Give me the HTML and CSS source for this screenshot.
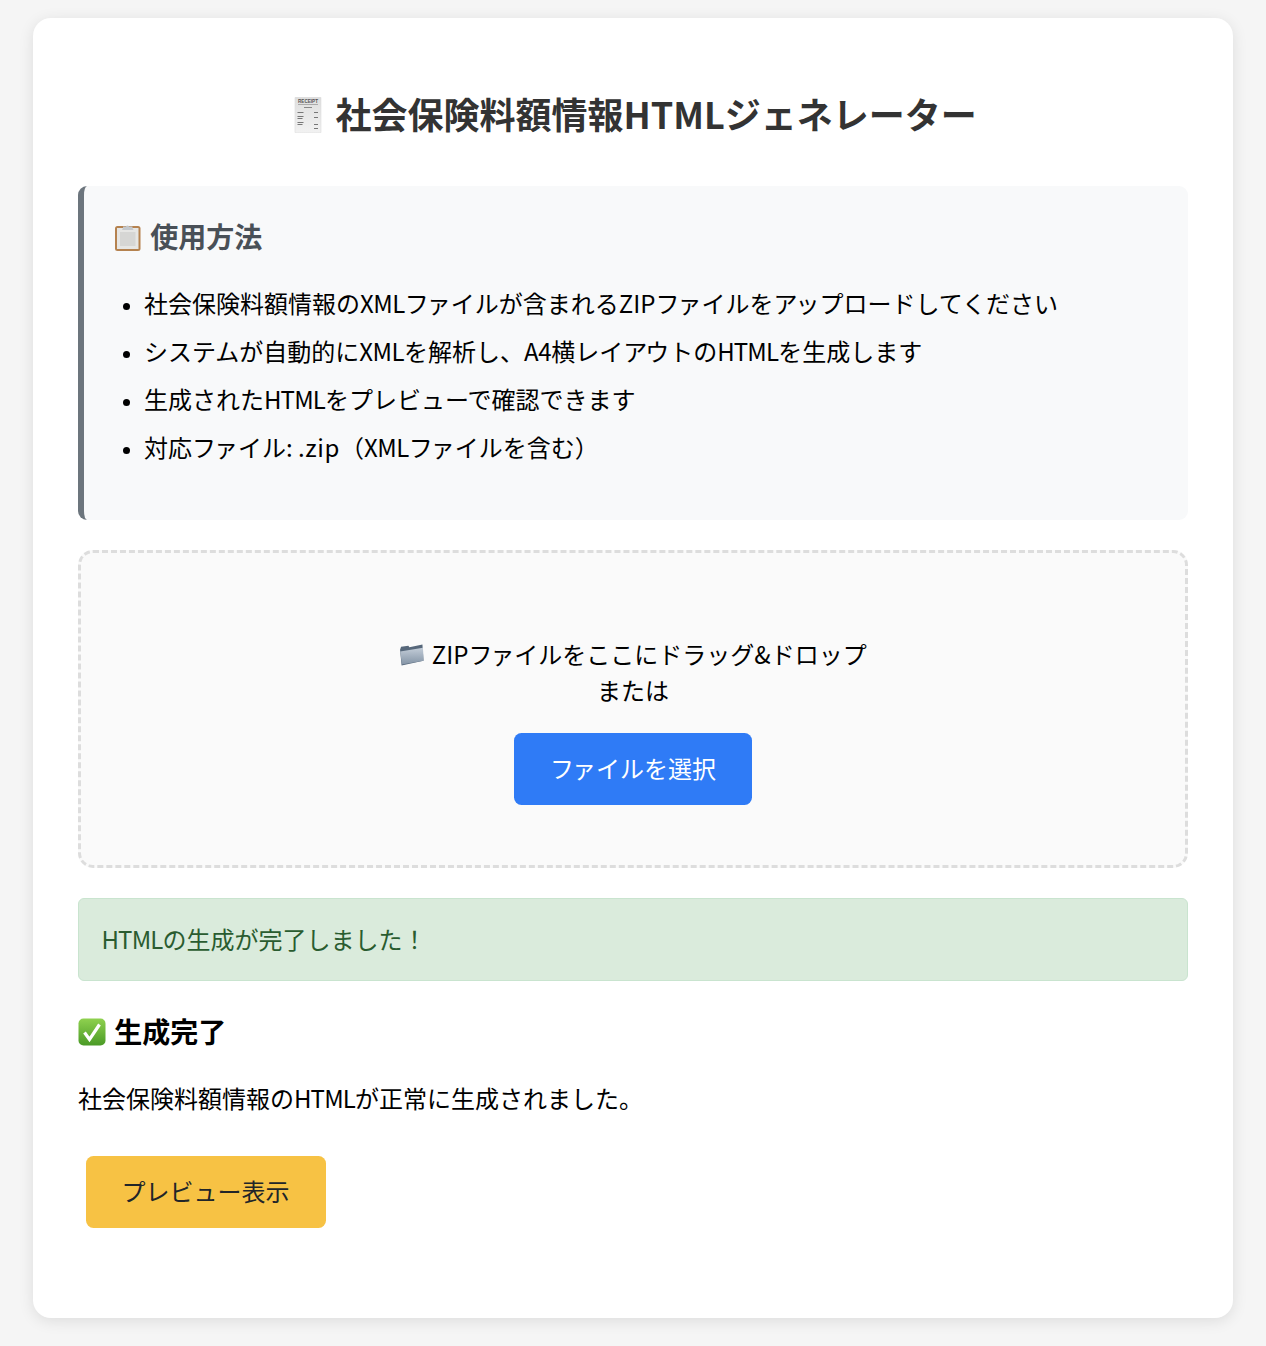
FILE: index.html
```html
<!DOCTYPE html>
<html lang="ja">
<head>
<meta charset="utf-8">
<title>社会保険料額情報HTMLジェネレーター</title>
<link rel="stylesheet" href="styles.css">
</head>
<body>
<main class="container">
  <h1 class="title"><svg class="icon icon-receipt" viewBox="0 0 36 36" aria-hidden="true"><defs><linearGradient id="paper" x1="0" y1="0" x2="0" y2="1"><stop offset="0" stop-color="#dedede"/><stop offset="1" stop-color="#f2f2f2"/></linearGradient></defs><rect x="6" y="0" width="26" height="36" rx="1" fill="url(#paper)" stroke="#dcdcdc" stroke-width=".6"/><text class="receipt-word" x="19" y="5.6" text-anchor="middle">RECEIPT</text><rect x="9" y="7" width="20" height="1" fill="#aaa"/><rect x="15" y="10" width="8" height="1" fill="#888"/><g fill="#777"><rect x="8.5" y="15" width="6" height="1"/><rect x="25" y="15" width="4" height="1"/><rect x="8.5" y="19" width="6" height="1"/><rect x="8.5" y="21" width="5" height="1"/><rect x="25" y="20" width="4" height="1"/><rect x="8.5" y="25" width="6" height="1"/><rect x="8.5" y="27" width="5" height="1"/><rect x="25" y="27" width="4" height="1"/><rect x="25" y="31" width="4" height="1"/></g></svg> 社会保険料額情報HTMLジェネレーター</h1>

  <section class="usage">
    <h3 class="usage-title"><svg class="icon icon-clip" viewBox="0 0 28 28" aria-hidden="true"><rect x="1" y="3" width="25.5" height="25" rx="2.5" fill="#b5824f"/><rect x="3" y="5" width="21.5" height="21" fill="#e6e6e4"/><rect x="6" y="9" width="15.5" height="14" fill="#d6d6d4"/><path d="M9 5V3.5h3a1.6 1.6 0 0 1 3 0H18.500V5l1 2H8z" fill="#c4c8cc"/></svg> 使用方法</h3>
    <ul class="usage-list">
      <li>社会保険料額情報の<span class="lat-xml">XML</span><span class="kern">フ</span>ァイルが含まれる<span class="lat-zip">ZIP</span><span class="kern">フ</span>ァイルを<span class="kern">ア</span>ップロードしてください</li>
      <li>システムが自動的に<span class="lat-xml">XML</span>を解析し、<span class="lat-a4">A4</span>横レイ<span class="kern">ア</span>ウトの<span class="lat">HTML</span>を生成します</li>
      <li>生成された<span class="lat">HTML</span>をプレビューで確認できます</li>
      <li>対応<span class="kern">フ</span>ァイル: <span class="lat-ext">.zip</span>（<span class="lat-xml">XML</span><span class="kern">フ</span>ァイルを含む）</li>
    </ul>
  </section>

  <section class="dropzone">
    <p class="drop-text"><svg class="icon icon-folder" viewBox="0 0 24 24" aria-hidden="true"><defs><linearGradient id="fold" x1="0" y1="0" x2="0" y2="1"><stop offset="0" stop-color="#c3cdd8"/><stop offset="1" stop-color="#8494a6"/></linearGradient></defs><path d="M1 7.5 2 4.5 9 3.5 10 5 22.5 2.5 23.5 18 2.5 22.5z" fill="#56677a"/><path d="M1.2 9 23 5.500 23.7 18 2.8 21.5z" fill="url(#fold)"/></svg> <span class="lat-zip">ZIP</span><span class="kern">フ</span>ァイルをここにドラッグ&amp;ドロップ<br>または</p>
    <button class="btn btn-primary" type="button"><span class="kern">フ</span>ァイルを選択</button>
  </section>

  <div class="alert"><span class="lat">HTML</span>の生成が完了しました！</div>

  <section class="result">
    <h3 class="result-title"><svg class="icon icon-check" viewBox="0 0 28 28" aria-hidden="true"><defs><linearGradient id="chk" x1="0" y1="0" x2="0" y2="1"><stop offset="0" stop-color="#8fd14f"/><stop offset="1" stop-color="#4a9a26"/></linearGradient></defs><rect x=".5" y=".5" width="27" height="27" rx="5" fill="url(#chk)"/><path d="M6.5 14.5 11.5 21.5 21.5 6.500" fill="none" stroke="#fff" stroke-width="3.2"/></svg> 生成完了</h3>
    <p class="result-text">社会保険料額情報の<span class="lat">HTML</span>が正常に生成されました。</p>
    <button class="btn btn-warning" type="button">プレビュー表示</button>
  </section>
</main>
</body>
</html>
```
FILE: styles.css
```css
* { box-sizing: border-box; }
html { background: #f5f5f5; }
body {
  margin: 0;
  padding: 18px 33px 28px;
  font-family: "Noto Sans CJK JP", sans-serif;
  font-size: 24px;
  line-height: 36px;
  color: #000;
}
.lat { letter-spacing: -.85px; }
.lat-xml { letter-spacing: -.5px; }
.lat-zip { letter-spacing: 0; }
.lat-a4 { letter-spacing: -.4px; }
.lat-ext { letter-spacing: .6px; }
.kern { letter-spacing: -2px; }
.container {
  background: #fff;
  border-radius: 18px;
  padding: 45px;
  box-shadow: 0 3px 15px rgba(0, 0, 0, .1);
}
.title {
  margin: 23px 0 46px;
  font-size: 36px;
  line-height: 54px;
  font-weight: 700;
  color: #333;
  text-align: center;
}
.icon { display: inline-block; vertical-align: -0.12em; margin-right: 2px; }
.icon-receipt { width: 36px; height: 36px; }
.icon-clip { width: 28px; height: 28px; }
.icon-folder { width: 25px; height: 25px; }
.icon-check { width: 28px; height: 28px; }
.receipt-word { font: 700 4.6px "Liberation Sans", sans-serif; fill: #555; }
.usage {
  background: #f8f9fa;
  border-left: 6px solid #6c757d;
  border-radius: 9px;
  padding: 29px 30px 30px;
  margin-bottom: 30px;
}
.usage-title {
  margin: 0 0 28px;
  font-size: 28px;
  line-height: 42px;
  color: #495057;
}
.usage-list { margin: 0 0 25px; padding-left: 30px; }
.usage-list li { margin-bottom: 12px; }
.usage-list li:last-child { margin-bottom: 0; }
.usage-list li::marker { font-family: "Liberation Sans", sans-serif; }
.dropzone {
  background: #fafafa;
  border: 3px dashed #ddd;
  border-radius: 15px;
  padding: 60px;
  margin-bottom: 30px;
  text-align: center;
}
.drop-text { margin: 23px 0 25px; }
.btn {
  display: inline-block;
  border: 0;
  border-radius: 7.5px;
  padding: 17px 36px 19px;
  font: inherit;
}
.btn-primary { background: #2f7bf6; color: #fff; }
.btn-warning { background: #f7c244; color: #212529; margin: 15px 7.5px; vertical-align: top; }
.alert {
  background: #daebdc;
  border: 1px solid #c9e4cf;
  border-radius: 6px;
  padding: 21.5px 22.5px 23.5px;
  color: #2a5c30;
  margin-bottom: 29px;
}
.result { margin-bottom: 30px; }
.result-title { margin: 0 0 28px; font-size: 28px; line-height: 42px; }
.result-text { margin: 0 0 25px; }
```
